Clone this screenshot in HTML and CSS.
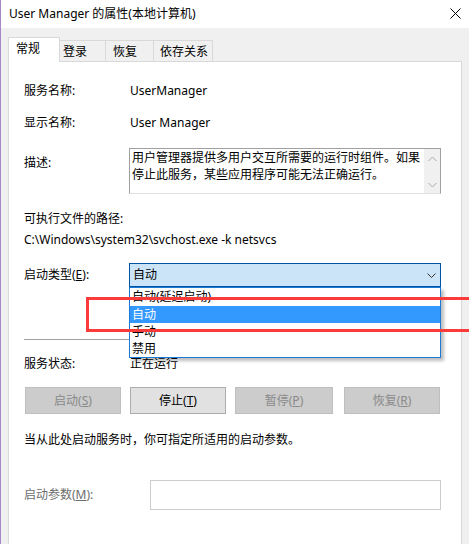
FILE: index.html
```html
<!DOCTYPE html>
<html lang="zh-CN">
<head>
<meta charset="utf-8">
<title>User Manager 的属性(本地计算机)</title>
<link rel="stylesheet" href="styles.css">
</head>
<body>
<div class="window">
  <div class="titlebar">
    <span class="title">User Manager 的属性(本地计算机)</span>
    <svg class="close" width="11" height="11" viewBox="0 0 11 11"><path d="M0.5 0.5L10.5 10.5M10.5 0.5L0.5 10.5" stroke="#000" stroke-width="1" fill="none"/></svg>
  </div>
  <div class="tabs">
    <div class="tab sel">常规</div>
    <div class="tab t2">登录</div>
    <div class="tab t3">恢复</div>
    <div class="tab t4">依存关系</div>
  </div>
  <div class="panel">
    <div class="row r1"><span class="label">服务名称:</span><span class="value">UserManager</span></div>
    <div class="row r2"><span class="label">显示名称:</span><span class="value">User Manager</span></div>
    <div class="row rdesc">
      <span class="label desc-label">描述:</span>
      <div class="descbox">
        <div class="desctext">用户管理器提供多用户交互所需要的运行时组件。如果<br>停止此服务，某些应用程序可能无法正确运行。</div>
        <div class="vscroll">
          <svg width="9" height="6" viewBox="0 0 9 6"><path d="M0.5 5L4.5 1L8.5 5" stroke="#a8a8a8" fill="none"/></svg>
          <svg width="9" height="6" viewBox="0 0 9 6"><path d="M0.5 1L4.5 5L8.5 1" stroke="#a8a8a8" fill="none"/></svg>
        </div>
      </div>
    </div>
    <div class="exe-label">可执行文件的路径:</div>
    <div class="exe-path">C:\Windows\system32\svchost.exe -k netsvcs</div>
    <div class="row rstart">
      <span class="label">启动类型(<u>E</u>):</span>
      <div class="selectwrap">
        <div class="select">
          <span>自动</span>
          <svg width="9" height="5" viewBox="0 0 9 5"><path d="M0.5 0.5L4.5 4.5L8.5 0.5" stroke="#333" fill="none"/></svg>
        </div>
        <ul class="dropdown">
          <li class="opt first">自动(延迟启动)</li>
          <li class="opt hl">自动</li>
          <li class="opt">手动</li>
          <li class="opt">禁用</li>
        </ul>
      </div>
    </div>
    <div class="sep"></div>
    <div class="row rstatus"><span class="label">服务状态:</span><span class="value">正在运行</span></div>
    <div class="buttons">
      <button class="btn dis">启动(<u>S</u>)</button>
      <button class="btn">停止(<u>T</u>)</button>
      <button class="btn dis wide">暂停(<u>P</u>)</button>
      <button class="btn dis last">恢复(<u>R</u>)</button>
    </div>
    <div class="hint">当从此处启动服务时，你可指定所适用的启动参数。</div>
    <div class="row rparam">
      <span class="label grey">启动参数(<u>M</u>):</span>
      <div class="paraminput"></div>
    </div>
  </div>
  <div class="redbox"></div>
</div>
</body>
</html>
```
FILE: styles.css
```css
* { box-sizing: border-box; }
html, body { margin: 0; padding: 0; }
body {
  width: 469px;
  height: 544px;
  overflow: hidden;
  background: #f0f0f0;
  font-family: "Noto Sans", "Noto Sans CJK SC", sans-serif;
  font-size: 12px;
  line-height: 16px;
  color: #000;
}
.window {
  position: relative;
  height: 544px;
  overflow: hidden;
  border-left: 1px solid #a688c6;
  background: #f0f0f0;
}
.titlebar {
  height: 28px;
  background: #fff;
  display: flex;
  align-items: center;
  justify-content: space-between;
  padding: 0 8px 0 8px;
}
.close { display: block; margin-top: -1px; }
.tabs {
  display: flex;
  align-items: flex-end;
  height: 33px;
  padding-left: 7px;
}
.tab {
  height: 21px;
  border-top: 1px solid #d9d9d9;
  border-right: 1px solid #d9d9d9;
  padding-top: 3px;
  background: #f0f0f0;
  white-space: nowrap;
}
.tab.sel {
  position: relative;
  z-index: 1;
  height: 25px;
  width: 52px;
  margin-bottom: -1px;
  border: 1px solid #d9d9d9;
  border-bottom: none;
  background: #fff;
  padding-left: 7px;
  padding-top: 3px;
}
.t2 { width: 46px; padding-left: 3px; }
.t3 { width: 48px; padding-left: 7px; }
.t4 { width: 59px; padding-left: 6px; }
.panel {
  margin-left: 7px;
  width: 454px;
  height: 483px;
  border: 1px solid #d9d9d9;
  border-bottom: none;
  background: #fff;
  padding: 0 20px 0 15px;
}
.row {
  display: grid;
  grid-template-columns: 105px 312px;
  align-items: center;
}
.value { padding-left: 1px; }
.r1 { margin-top: 21px; }
.r2 { margin-top: 16px; }
.rdesc { margin-top: 17px; align-items: start; }
.desc-label { padding-top: 7px; }
.descbox {
  height: 46px;
  border: 1px solid #a0a0a0;
  border-bottom-color: #e0e0e0;
  display: flex;
}
.desctext {
  flex: 1;
  padding-left: 2px;
  line-height: 17px;
  white-space: nowrap;
}
.vscroll {
  width: 16px;
  background: #f0f0f0;
  display: flex;
  flex-direction: column;
  align-items: center;
  justify-content: space-between;
  padding: 7px 0 5px;
}
.vscroll svg { display: block; }
.exe-label { margin-top: 17px; }
.exe-path { margin-top: 5px; }
.rstart { margin-top: 15px; }
.selectwrap { position: relative; }
.select {
  height: 24px;
  border: 1px solid #0054a6;
  background: #cce4f7;
  display: flex;
  align-items: center;
  justify-content: space-between;
  padding: 0 4px 0 3px;
}
.select svg { display: block; }
.dropdown {
  position: absolute;
  z-index: 2;
  top: 100%;
  left: 0;
  width: 312px;
  margin: 0;
  padding: 0;
  list-style: none;
  background: #fff;
  border: 1px solid #1a7ad6;
  box-shadow: 3px 3px 3px rgba(0, 0, 0, 0.25);
}
.opt {
  height: 17px;
  line-height: 17px;
  padding-left: 2px;
}
.opt.first { height: 18px; }
.opt.hl { background: #3399ff; color: #fff; }
.sep {
  margin-top: 52px;
  height: 1px;
  background: #a0a0a0;
}
.rstatus { margin-top: 16px; }
.buttons {
  margin-top: 15px;
  display: flex;
  gap: 9px;
  padding-left: 1px;
}
.btn {
  width: 96px;
  height: 27px;
  font: inherit;
  line-height: 16px;
  padding: 0;
  background: #e1e1e1;
  border: 1px solid #adadad;
  color: #000;
}
.btn.dis {
  background: #cccccc;
  border-color: #bfbfbf;
  color: #8a8a8a;
}
.btn.wide { width: 98px; }
.btn.last { margin-left: 2px; }
.hint { margin-top: 18px; }
.rparam {
  margin-top: 32px;
  grid-template-columns: 126px 291px;
}
.grey { color: #6d6d6d; }
.paraminput {
  height: 30px;
  border: 1px solid #cccccc;
  background: #fff;
}
.redbox {
  position: absolute;
  z-index: 3;
  left: 85px;
  top: 297px;
  width: 383px;
  height: 35px;
  border: 3px solid #fb3a3a;
  border-right: none;
}
```
